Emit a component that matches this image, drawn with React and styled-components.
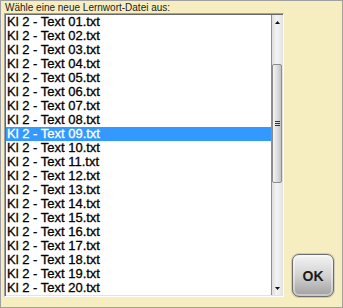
import React, { useState } from 'react'
import styled, { createGlobalStyle } from 'styled-components';

const GlobalStyle = createGlobalStyle`
  html, body {
    margin: 0;
    padding: 0;
    background: #f6eec0;
  }
`;

const files = Array.from({ length: 20 }, (_, i) =>
  `Kl 2 - Text ${String(i + 1).padStart(2, '0')}.txt`
);

function App() {
  const [selected, setSelected] = useState(8);

  return (
    <Window>
      <GlobalStyle />
      <Label>Wähle eine neue Lernwort-Datei aus:</Label>
      <Body>
        <ListBox>
          <Rows>
            {files.map((name, i) => (
              <Row key={name} active={i === selected} onClick={() => setSelected(i)}>
                {name}
              </Row>
            ))}
          </Rows>
          <Scrollbar>
            <Arrow>
              <svg width="5" height="3" viewBox="0 0 5 3"><path d="M2.5 0 L5 3 L0 3 Z" fill="#111" /></svg>
            </Arrow>
            <Thumb offset={35}>
              <svg width="5" height="5" viewBox="0 0 5 5">
                <path d="M0 0.5 H5 M0 2.5 H5 M0 4.5 H5" stroke="#333" strokeWidth="1" />
              </svg>
            </Thumb>
            <Arrow bottom>
              <svg width="5" height="3" viewBox="0 0 5 3"><path d="M0 0 L5 0 L2.5 3 Z" fill="#111" /></svg>
            </Arrow>
          </Scrollbar>
        </ListBox>
        <OkButton>OK</OkButton>
      </Body>
    </Window>
  );
}

const Window = styled.div`
  box-sizing: border-box;
  width: 343px;
  height: 308px;
  border: 1px solid #a0a0a0;
  background: #f6eec0;
  padding: 1px 8px 0 3px;
  display: flex;
  flex-direction: column;
  font-family: "Liberation Sans", Arial, sans-serif;
`;

const Label = styled.div`
  font-size: 10px;
  line-height: 11px;
  color: #222;
  padding-left: 1px;
`;

const Body = styled.div`
  display: flex;
  align-items: flex-end;
  gap: 8px;
`;

const ListBox = styled.div`
  box-sizing: border-box;
  width: 280px;
  height: 284px;
  display: flex;
  border-style: solid;
  border-width: 1px;
  border-color: #a0a0a0 #ffffff #ffffff #a0a0a0;
  box-shadow: inset 1px 1px 0 #696969, inset -1px -1px 0 #e3e3e3;
  padding: 1px;
  background: #fff;
`;

const Rows = styled.div`
  flex: 1;
  display: flex;
  flex-direction: column;
`;

const Row = styled.div`
  height: 14px;
  line-height: 14px;
  font-size: 13px;
  padding-left: 1px;
  white-space: nowrap;
  cursor: default;
  -webkit-text-stroke: 0.3px currentColor;
  color: ${p => (p.active ? '#fff' : '#000')};
  background: ${p => (p.active ? '#3399ff' : 'transparent')};
`;

const Scrollbar = styled.div`
  width: 10px;
  flex: none;
  display: flex;
  flex-direction: column;
  align-items: center;
  border-left: 1px solid #8e8e8e;
  background: linear-gradient(to right, #dedede, #f3f3f3 45%, #e6e6e6);
`;

const Arrow = styled.div`
  height: 14px;
  width: 100%;
  flex: none;
  display: flex;
  align-items: center;
  justify-content: center;
  margin-top: ${p => (p.bottom ? 'auto' : '0')};
`;

const Thumb = styled.div`
  box-sizing: border-box;
  margin-top: ${p => p.offset}px;
  width: 10px;
  height: 119px;
  border: 1px solid #8c8c8c;
  border-radius: 2px;
  background: linear-gradient(to right, #f4f4f4, #dcdcdc 55%, #c4c4c4);
  display: flex;
  align-items: center;
  justify-content: center;
`;

const OkButton = styled.button`
  box-sizing: border-box;
  width: 42px;
  height: 43px;
  padding: 0;
  border: 1px solid #6e6e6e;
  border-radius: 7px;
  background: linear-gradient(to bottom, #f4f4f4, #d2d2d2 50%, #a0a0a0);
  box-shadow: inset 0 0 0 2px rgba(255, 255, 255, 0.4), 0 0 0 1px #cfcab0;
  font-family: "Liberation Sans", Arial, sans-serif;
  font-weight: bold;
  font-size: 14px;
  color: #1a1a1a;
`;

export default App;
